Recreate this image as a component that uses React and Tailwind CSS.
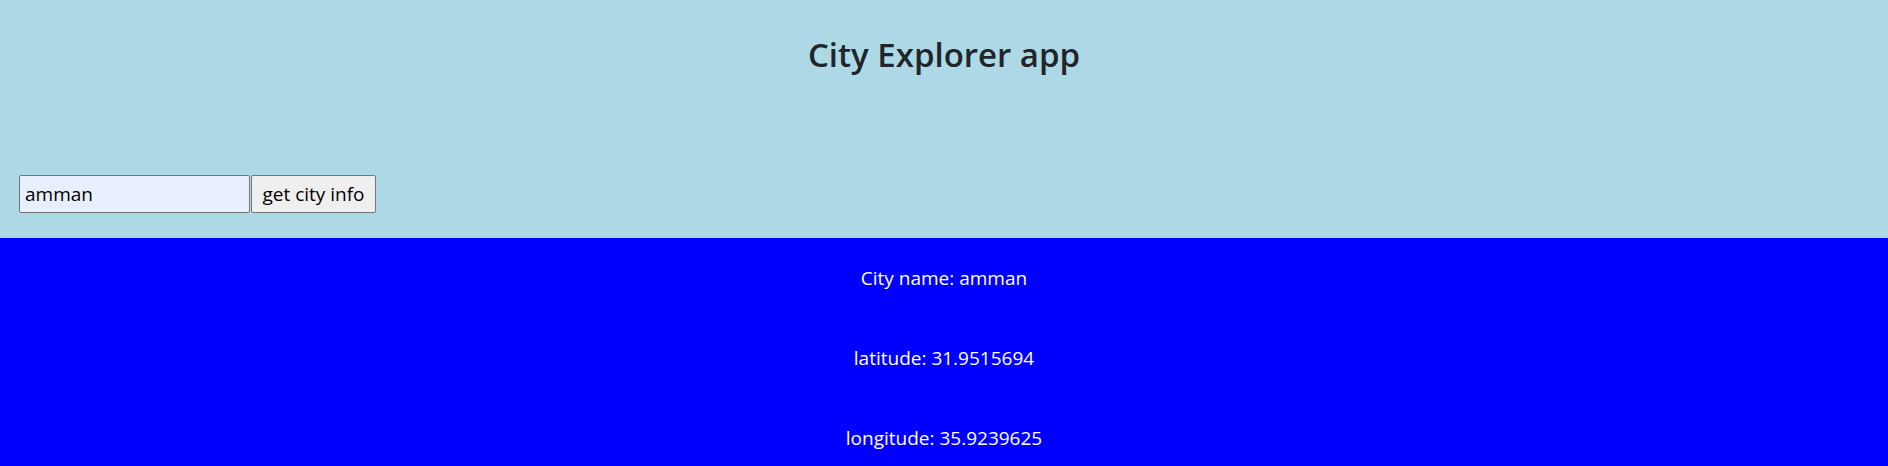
export default function App() {
  const font = { fontFamily: '"Open Sans", "Noto Sans", sans-serif' };
  return (
    <div className="w-[1888px] h-[466px] overflow-hidden" style={font}>
      <div className="bg-[#add8e6] h-[238px] flex flex-col">
        <h3 className="text-center text-[33px] leading-[40px] font-semibold text-[#212529] pt-[35px]">
          City Explorer app
        </h3>
        <div className="flex mt-[100px] pl-[19px]">
          <input
            defaultValue="amman"
            className="w-[231px] h-[38px] bg-[#e8f0fe] border border-[#767676] rounded-[2px] px-[5px] text-[19px] text-black outline-none"
            style={font}
          />
          <button
            className="w-[125px] h-[38px] ml-[1px] bg-[#efefef] border border-[#767676] rounded-[2px] text-[19px] text-black"
            style={font}
          >
            get city info
          </button>
        </div>
      </div>
      <div className="bg-[#0000ff] h-[228px] text-white text-center text-[19px] leading-[24px] pt-[28px] flex flex-col gap-[56px]">
        <p>City name: amman</p>
        <p>latitude: 31.9515694</p>
        <p>longitude: 35.9239625</p>
      </div>
    </div>
  );
}
